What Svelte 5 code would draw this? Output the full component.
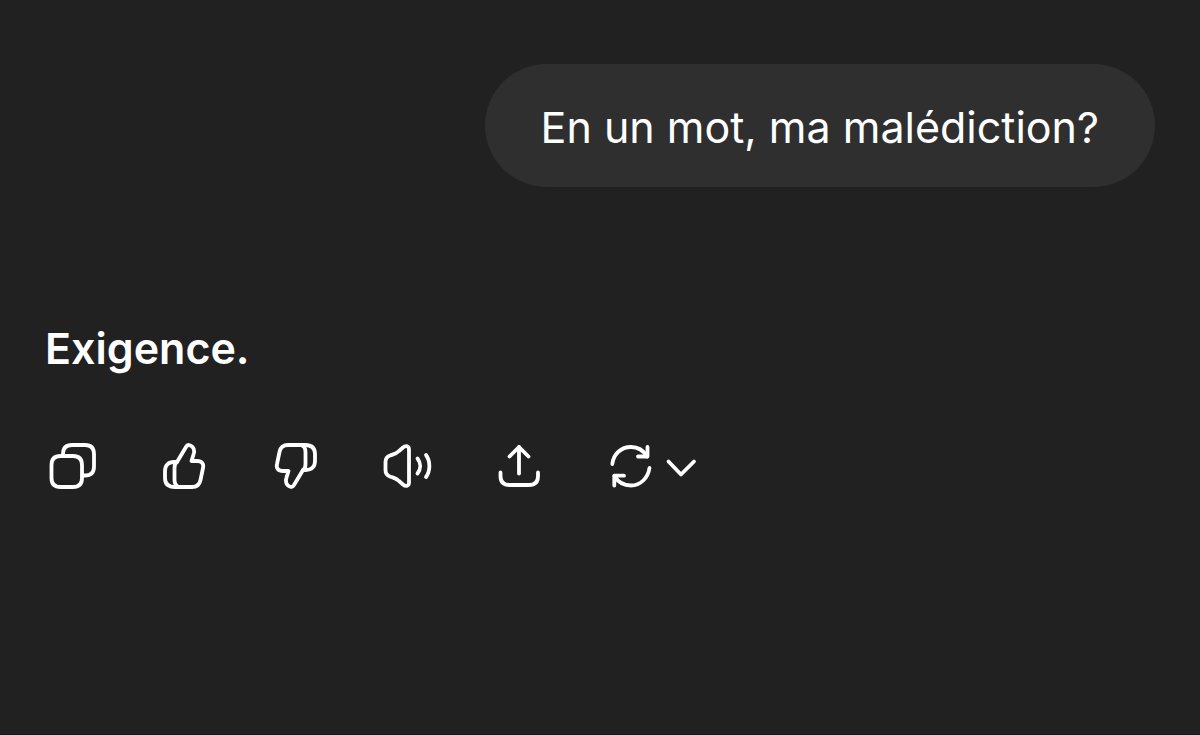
<script lang="ts">
  // Short chat thread: one user message, one reply and its action row.

  interface Action {
    label: string;
    paths: string[];
    flipped?: boolean;
  }

  const thumb = [
    'M25 28 L34 13 Q35 11 37 11 C42 12 43 17 41.5 20.5 L39.5 27 H45 C50 27 52 30 51 34 L48.5 46 C47.5 51 45 53 40 53 H23 C16.5 53 13 50 13 44 V37 C13 31 16.5 28 22 28 Z',
    'M25 28 Q22.5 29.5 22.5 34 V46 Q22.5 51.5 27 53'
  ];

  const actions: Action[] = [
    {
      label: 'Copier',
      paths: [
        'M20.5 22 H33 Q42 22 42 31 V44 Q42 53 33 53 H20.5 Q11.5 53 11.5 44 V31 Q11.5 22 20.5 22 Z',
        'M23 21.5 V20 Q23 11 32 11 H45 Q54 11 54 20 V32.5 Q54 41.5 45 41.5 H42.5'
      ]
    },
    { label: 'Bonne réponse', paths: thumb },
    { label: 'Mauvaise réponse', paths: thumb, flipped: true },
    {
      label: 'Lire à voix haute',
      paths: [
        'M14 21.5 C18 20 20 20 23 17 L27 13.5 C30 11 33 12 33 15.5 V48.5 C33 52 30 53 27 50.5 L23 47 C20 44 18 44 14 42.5 Q9.5 41 9.5 36 V28 Q9.5 23 14 21.5 Z',
        'M41.5 24.5 C45 29 45 35 41.5 39.5',
        'M50 21 C54.5 27 54.5 37 50 43'
      ]
    },
    {
      label: 'Partager',
      paths: [
        'M31 39.5 V13',
        'M21.5 22.5 L31 13 L40.5 22.5',
        'M12.5 38.5 V42 Q12.5 51 21.5 51 H41 Q50 51 50 42 V38.5'
      ]
    }
  ];
</script>

<main class="thread">
  <p class="question">En un mot, ma malédiction?</p>

  <article class="reply">
    <p><strong>Exigence.</strong></p>
    <div class="actions">
      {#each actions as action (action.label)}
        <button type="button" aria-label={action.label}>
          <svg class="icon" class:flipped={action.flipped} viewBox="0 0 64 64" aria-hidden="true">
            {#each action.paths as d}
              <path {d} />
            {/each}
          </svg>
        </button>
      {/each}
      <button type="button" aria-label="Régénérer">
        <svg class="icon wide" viewBox="0 0 108 64" aria-hidden="true">
          <path d="M12.3 30 C13.5 20 21 13 31 13 C38 13 43.5 16.5 47 22.5" />
          <path d="M47.5 13 V22.5 H38" />
          <path d="M49.5 34 C48 44 40.5 51.5 31 51.5 C24 51.5 18 48 14.5 42" />
          <path d="M14.3 51.5 V41.7 H24" />
          <path d="M68.5 27.5 L81 40.5 L94 27.5" />
        </svg>
      </button>
    </div>
  </article>
</main>

<style>
  :global(body) {
    margin: 0;
    background: #212121;
  }
  .thread {
    box-sizing: border-box;
    min-height: 100vh;
    padding: 64px 45px 48px;
    border-bottom: 1px solid #1b141b;
    background: #212121;
    color: #fff;
    font-family: Inter, 'Liberation Sans', sans-serif;
    font-size: 43px;
    line-height: 60px;
  }
  p {
    margin: 0;
  }
  .question {
    width: fit-content;
    margin-left: auto;
    padding: 33px 56px 30px;
    border-radius: 62px;
    background: #2f2f2f;
  }
  .reply {
    margin-top: 131px;
  }
  strong {
    font-weight: 600;
  }
  .actions {
    display: flex;
    flex-wrap: wrap;
    gap: 48px;
    margin: 56px 0 0 -5px;
  }
  button {
    display: flex;
    padding: 0;
    border: 0;
    background: none;
    color: inherit;
    cursor: pointer;
  }
  .icon {
    width: 64px;
    height: 64px;
    fill: none;
    stroke: currentColor;
    stroke-width: 3.8;
    stroke-linecap: round;
    stroke-linejoin: round;
  }
  .wide {
    width: 108px;
  }
  .flipped {
    transform: rotate(180deg);
  }
</style>
